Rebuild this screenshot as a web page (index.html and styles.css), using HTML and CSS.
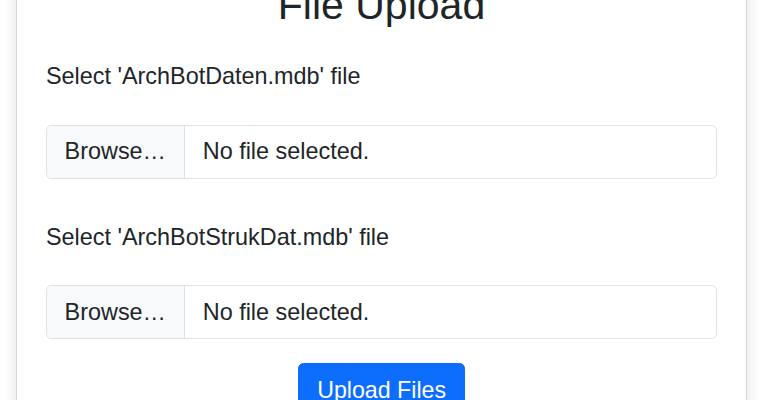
FILE: index.html
```html
<!DOCTYPE html>
<html lang="en">
<head>
<meta charset="utf-8">
<title>File Upload</title>
<link rel="stylesheet" href="styles.css">
</head>
<body>
<div class="wrap">
  <div class="card">
    <h1 class="title">File Upload</h1>
    <form class="upload-form">
      <div class="group">
        <label class="field-label">Select 'ArchBotDaten.mdb' file</label>
        <div class="file-input">
          <span class="file-btn">Browse…</span>
          <span class="file-name">No file selected.</span>
        </div>
      </div>
      <div class="group group-last">
        <label class="field-label">Select 'ArchBotStrukDat.mdb' file</label>
        <div class="file-input">
          <span class="file-btn">Browse…</span>
          <span class="file-name">No file selected.</span>
        </div>
      </div>
      <div class="actions">
        <button type="button" class="btn-primary">Upload Files</button>
      </div>
    </form>
  </div>
</div>
</body>
</html>
```
FILE: styles.css
```css
html, body {
  margin: 0;
  padding: 0;
  background: #ffffff;
}
body {
  font-family: "Liberation Sans", Arial, sans-serif;
  color: #212529;
  font-size: 23.4px;
  line-height: 1.49;
  overflow: hidden;
}
.wrap {
  margin-top: -49px;
  padding: 0 13px 0 16px;
}
.card {
  border: 1px solid #d6d6d6;
  border-radius: 6px;
  background: #fff;
  box-shadow: 0 0 14px rgba(0, 0, 0, 0.12);
  padding: 29px 29px 40px;
}
.title {
  margin: 0 0 29px;
  font-size: 41px;
  line-height: 1.2;
  font-weight: 400;
  text-align: center;
}
.group {
  margin-bottom: 41px;
}
.group-last {
  margin-bottom: 24px;
}
.field-label {
  display: block;
  margin-bottom: 30.5px;
}
.file-input {
  display: flex;
  align-items: stretch;
  border: 1px solid #dee2e6;
  border-radius: 5.4px;
  overflow: hidden;
  background: #fff;
}
.file-btn {
  background: #f8f9fa;
  border-right: 1px solid #dee2e6;
  padding: 8.7px 18.2px 8.7px 17.6px;
}
.file-name {
  padding: 8.7px 17.6px;
}
.actions {
  display: flex;
  justify-content: center;
}
.btn-primary {
  font-family: inherit;
  font-size: 23.2px;
  line-height: 1.5;
  color: #fff;
  background: #0d6efd;
  border: 1px solid #0d6efd;
  border-radius: 5.4px;
  padding: 8.7px 17.6px 8.7px 17.8px;
  cursor: pointer;
}
```
